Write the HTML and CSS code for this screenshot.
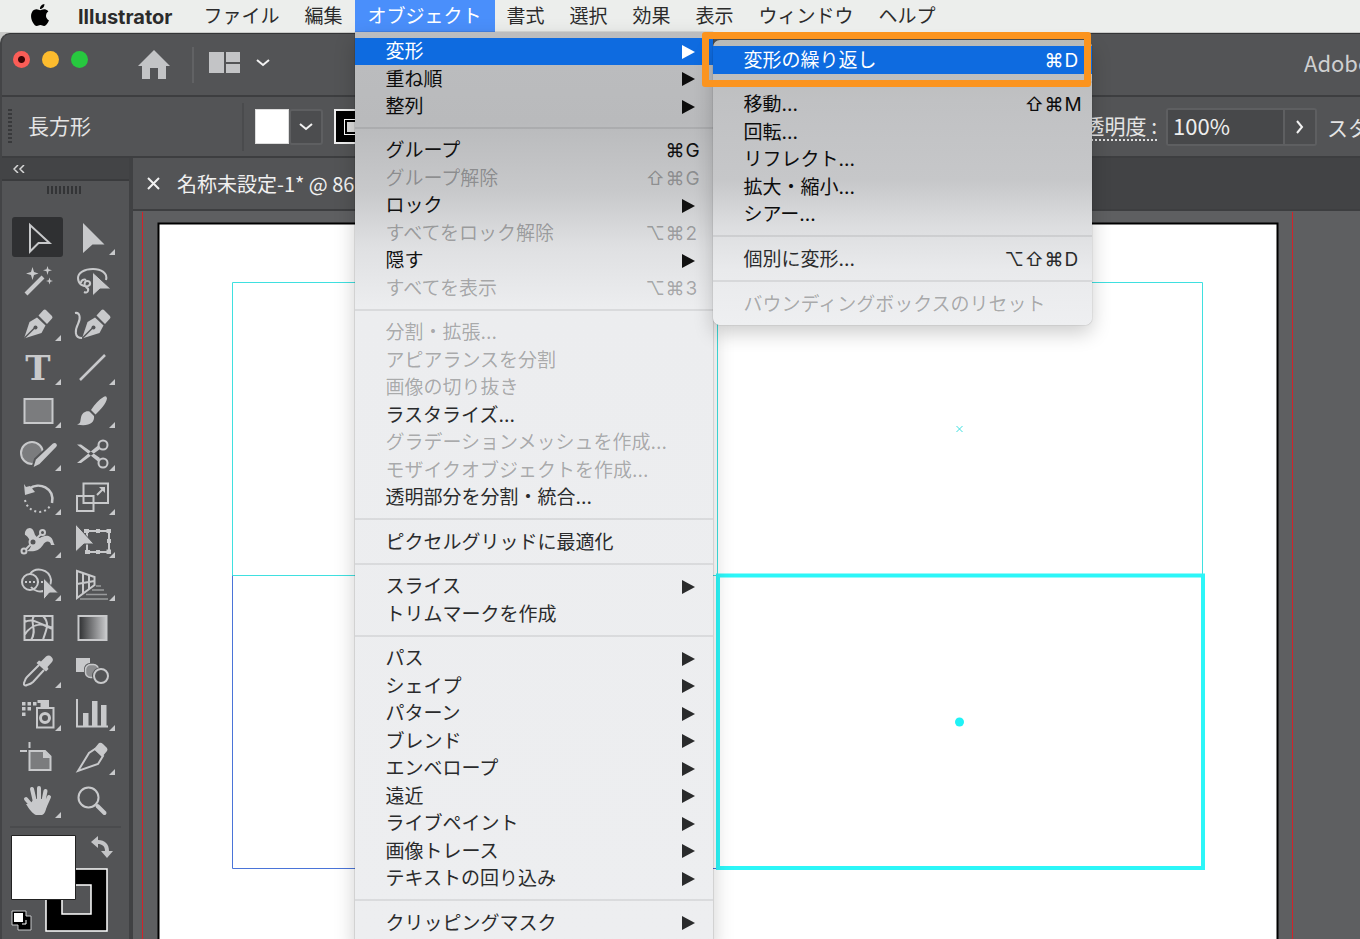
FILE: index.html
```html
<!DOCTYPE html>
<html lang="ja">
<head>
<meta charset="utf-8">
<title>Illustrator</title>
<link rel="stylesheet" href="styles.css">
</head>
<body>
<nav class="menubar">
  <button class="apple" aria-label="Apple"><svg viewBox="0 0 24 24" width="22" height="22"><path d="M12.152 6.896c-.948 0-2.415-1.078-3.96-1.04-2.04.027-3.91 1.183-4.961 3.014-2.117 3.675-.546 9.103 1.519 12.09 1.013 1.454 2.208 3.09 3.792 3.039 1.52-.065 2.09-.987 3.935-.987 1.831 0 2.35.987 3.96.948 1.637-.026 2.676-1.48 3.676-2.948 1.156-1.688 1.636-3.325 1.662-3.415-.039-.013-3.182-1.221-3.22-4.857-.026-3.04 2.48-4.494 2.597-4.559-1.429-2.09-3.623-2.324-4.39-2.376-2-.156-3.675 1.09-4.61 1.09zM15.53 3.83c.843-1.012 1.4-2.427 1.245-3.83-1.207.052-2.662.805-3.532 1.818-.78.896-1.454 2.338-1.273 3.714 1.338.104 2.715-.688 3.559-1.701"/></svg></button>
  <button class="bar-item app-name">Illustrator</button>
  <button class="bar-item">ファイル</button>
  <button class="bar-item">編集</button>
  <div class="bar-slot">
    <button class="bar-item open">オブジェクト</button>
    <div class="menu main-menu">
      <div class="group">
        <div class="item-slot">
          <button class="item active">変形<i class="arrow"></i></button>
          <div class="menu sub-menu">
            <div class="group"><button class="item active">変形の繰り返し<kbd><span>⌘</span><b>D</b></kbd></button></div>
            <div class="group">
              <button class="item">移動...<kbd><span>⇧</span><span>⌘</span><b>M</b></kbd></button>
              <button class="item">回転...</button>
              <button class="item">リフレクト...</button>
              <button class="item">拡大・縮小...</button>
              <button class="item">シアー...</button>
            </div>
            <div class="group"><button class="item">個別に変形...<kbd><span>⌥</span><span>⇧</span><span>⌘</span><b>D</b></kbd></button></div>
            <div class="group"><button class="item" disabled>バウンディングボックスのリセット</button></div>
            <div class="highlight"></div>
          </div>
        </div>
        <button class="item">重ね順<i class="arrow"></i></button>
        <button class="item">整列<i class="arrow"></i></button>
      </div>
      <div class="group">
        <button class="item">グループ<kbd><span>⌘</span><b>G</b></kbd></button>
        <button class="item" disabled>グループ解除<kbd><span>⇧</span><span>⌘</span><b>G</b></kbd></button>
        <button class="item">ロック<i class="arrow"></i></button>
        <button class="item" disabled>すべてをロック解除<kbd><span>⌥</span><span>⌘</span><b>2</b></kbd></button>
        <button class="item">隠す<i class="arrow"></i></button>
        <button class="item" disabled>すべてを表示<kbd><span>⌥</span><span>⌘</span><b>3</b></kbd></button>
      </div>
      <div class="group">
        <button class="item" disabled>分割・拡張...</button>
        <button class="item" disabled>アピアランスを分割</button>
        <button class="item" disabled>画像の切り抜き</button>
        <button class="item">ラスタライズ...</button>
        <button class="item" disabled>グラデーションメッシュを作成...</button>
        <button class="item" disabled>モザイクオブジェクトを作成...</button>
        <button class="item">透明部分を分割・統合...</button>
      </div>
      <div class="group"><button class="item">ピクセルグリッドに最適化</button></div>
      <div class="group">
        <button class="item">スライス<i class="arrow"></i></button>
        <button class="item">トリムマークを作成</button>
      </div>
      <div class="group">
        <button class="item">パス<i class="arrow"></i></button>
        <button class="item">シェイプ<i class="arrow"></i></button>
        <button class="item">パターン<i class="arrow"></i></button>
        <button class="item">ブレンド<i class="arrow"></i></button>
        <button class="item">エンベロープ<i class="arrow"></i></button>
        <button class="item">遠近<i class="arrow"></i></button>
        <button class="item">ライブペイント<i class="arrow"></i></button>
        <button class="item">画像トレース<i class="arrow"></i></button>
        <button class="item">テキストの回り込み<i class="arrow"></i></button>
      </div>
      <div class="group"><button class="item">クリッピングマスク<i class="arrow"></i></button></div>
    </div>
  </div>
  <button class="bar-item">書式</button>
  <button class="bar-item">選択</button>
  <button class="bar-item">効果</button>
  <button class="bar-item">表示</button>
  <button class="bar-item">ウィンドウ</button>
  <button class="bar-item">ヘルプ</button>
</nav>

<main class="app">
  <header class="titlebar">
    <div class="lights"><i class="light red"></i><i class="light yellow"></i><i class="light green"></i></div>
    <button class="home" aria-label="ホーム"><svg width="32" height="30" viewBox="0 0 32 30"><path fill="#c3c4c6" d="M16 0 32 16h-4v13h-8V18h-8v11H4V16H0z"/></svg></button>
    <div class="divider"></div>
    <button class="arrange" aria-label="ワークスペース"><svg width="62" height="22" viewBox="0 0 62 22"><path fill="#c3c4c6" d="M0 0h15v21H0zM17 0h14v10H17zM17 12h14v9H17z"/><path d="m48 8 6 5 6-5" fill="none" stroke="#f2f2f2" stroke-width="2"/></svg></button>
    <span class="search">Adobe Stock</span>
  </header>

  <section class="control">
    <div class="grip-v"></div>
    <span class="kind">長方形</span>
    <div class="swatch fill"></div>
    <button class="drop" aria-label="塗り"><svg width="14" height="8" viewBox="0 0 14 8"><path d="m1 1 6 5 6-5" fill="none" stroke="#f2f2f2" stroke-width="2"/></svg></button>
    <div class="swatch stroke"><i></i></div>
    <div class="opacity">
      <label for="opacity">不透明度 :</label>
      <div class="field"><input id="opacity" type="text" value="100%"><button aria-label="不透明度を選択"><svg width="8" height="14" viewBox="0 0 8 14"><path d="m1 1 5 6-5 6" fill="none" stroke="#f2f2f2" stroke-width="2"/></svg></button></div>
      <span class="style">スタイル</span>
    </div>
  </section>

  <section class="workspace">
    <aside class="tools">
      <div class="collapse"><button aria-label="折りたたむ"><svg width="12" height="8" viewBox="0 0 12 8"><path d="M5 0 1 4l4 4M11 0 7 4l4 4" fill="none" stroke="#d8d8d8" stroke-width="1.5"/></svg></button></div>
      <div class="grip-h"></div>
      <div class="tool-grid">
        <button class="tool selected" aria-label="選択"><svg viewBox="0 0 51 40"><path class="ln" d="M18 8v26.500l8.500-8.500h11z"/></svg></button>
        <button class="tool more" aria-label="ダイレクト選択"><svg viewBox="0 0 51 40"><path d="M17 6v30l9.500-8.500h12z"/></svg></button>

        <button class="tool" aria-label="自動選択"><svg viewBox="0 0 51 40"><path class="ln" stroke-width="4" d="m14 34 17-17"/><path d="m20.500 7 1.500 5 4.500 1.500-4.500 1.500-1.500 5-1.500-5-5-1.500 5-1.500zM35.500 6l1 3.200 3.500 1-3.500 1-1 3.800-1-3.800-3.500-1 3.500-1zM37.500 17.500l.9 2.700 2.600.8-2.600.8-.9 2.700-.9-2.700-2.600-.8 2.600-.8z"/></svg></button>
        <button class="tool" aria-label="なげなわ"><svg viewBox="0 0 51 40"><path class="ln" d="M40 20c2-7-5-11-13-11-9 0-15 4-15 9 0 6 5 9 10 8 3-1 3-5-1-5-3 0-3 5-1 6 4 2 2 7-2 5M15 23c0-3 3-4 5-3"/><path d="M26.500 12v24l7.500-7h11z" stroke="#535456"/></svg></button>

        <button class="tool more" aria-label="ペン"><svg viewBox="0 0 51 40"><g id="nib"><path d="M12 35.500 17.500 19l7.500-4.500 8.500 8-4 7.500z"/><path d="m26.500 12.500 5-5.500q1.500-1 3 .5l5.500 5.500q1 1.500 0 2.500l-5 5.500z"/><path d="m12 35.500 10.500-10.500" stroke="#535456" stroke-width="1.500"/><circle cx="23.500" cy="24.500" r="2" fill="#535456"/></g></svg></button>
        <button class="tool" aria-label="曲線"><svg viewBox="0 0 51 40"><use href="#nib" x="4"/><path class="ln" d="M9 10c5-1 6 5 3 11s-4 14 4 14"/></svg></button>

        <button class="tool more" aria-label="文字"><svg viewBox="0 0 51 40"><text x="26" y="33" text-anchor="middle" class="type">T</text></svg></button>
        <button class="tool more" aria-label="直線"><svg viewBox="0 0 51 40"><path class="ln" stroke-width="2.500" d="m14 33 25-25"/></svg></button>

        <button class="tool more" aria-label="長方形"><svg viewBox="0 0 51 40"><path class="ln tint" d="M12.500 9h28v24h-28z"/></svg></button>
        <button class="tool more" aria-label="ブラシ"><svg viewBox="0 0 51 40"><path d="M37.500 7q3-2 3.500 1.500c-1 5-6 11-11.500 16l-4.500-4.500c4-6 8-10.500 12.500-13zM23.500 21.500l4.500 4.500c1 7-6 11-17 8.500 4-1 3-3 4-7 1-5 5-7 8.500-6z"/></svg></button>

        <button class="tool more" aria-label="Shaper"><svg viewBox="0 0 51 40"><circle cx="20" cy="20" r="11" class="ln tint"/><path stroke="#535456" stroke-width="2" d="m20 36 3-10 17-16q3-2 5 0t0 4.500L28 32z"/></svg></button>
        <button class="tool more" aria-label="はさみ"><svg viewBox="0 0 51 40"><circle class="ln" cx="37" cy="12" r="4.500"/><circle class="ln" cx="37" cy="30" r="4.500"/><path d="M11 11.500h4l19 13.500-2 3.500zM11 30h4l19-14-2-3.500z"/></svg></button>

        <button class="tool more" aria-label="回転"><svg viewBox="0 0 51 40"><path class="ln" stroke-width="2.500" d="M17 12c10-8 26-1 23 14"/><path d="m12 7 2 3 4-1 5 6-10 3z"/><path class="ln" stroke-dasharray="2 3" d="M13 23c3 14 21 16 26 4"/></svg></button>
        <button class="tool more" aria-label="拡大・縮小"><svg viewBox="0 0 51 40"><path class="ln" d="M17.500 6.500h24.500v19.500h-24.500zM11 19h16.500v15H11zM31 18l6-6"/><path d="M33 10h6v6z"/></svg></button>

        <button class="tool more" aria-label="ワープ"><svg viewBox="0 0 51 40"><path d="M13 15c-1-7 7-10 9-3 1 4 3 6 6 6 4-3 11-4 13 3 1 4 2 4 2 4h-4c-1-5-6-4-8 0-4 6-9 7-16 6 5-3 5-8 2-12-2-3-3-4-4-4z"/><path class="ln" d="m14 29 15-15"/><g class="ln hole"><circle cx="12" cy="31" r="2.500"/><circle cx="30.500" cy="12.500" r="2.500"/><circle cx="21" cy="22" r="3.500"/></g></svg></button>
        <button class="tool more" aria-label="自由変形"><svg viewBox="0 0 51 40"><path class="ln" d="M21 11h22v21H21z"/><path d="M18 9h5v4h-5zM30 9h4v4h-4zM40.500 9h4.500v4h-4.500zM41 19h4v4h-4zM40.500 29.500h4.500v4.500h-4.500zM30 30h4v4h-4zM19 30h5v4h-5z"/><path stroke="#535456" d="M9.500 4v28l8.500-8h10z"/></svg></button>

        <button class="tool more" aria-label="シェイプ形成"><svg viewBox="0 0 51 40"><circle class="ln" cx="18" cy="19" r="8"/><path class="ln" d="M18 11c5-7 19-6 21 6 0 5-2 8-5 10-6 3-12 1-15-3"/><path class="ln" stroke-dasharray="2 2" d="M13 19h18"/><path d="M31.500 15v22l6-7h9z" stroke="#535456"/></svg></button>
        <button class="tool more" aria-label="遠近グリッド"><svg viewBox="0 0 51 40"><path class="ln" d="M11 8v27l17.500-13v-8zM11 21l17.500-3M17 10v20.500M23 12v14"/><path class="ln" stroke-width="1.500" opacity=".6" d="M30 23h5M26 27h12M20 31.500h21M14 36h28"/></svg></button>

        <button class="tool" aria-label="メッシュ"><svg viewBox="0 0 51 40"><path class="ln" d="M12.500 9h28v24h-28zM22 9c-5 6 4 14-3 24M31 9c8 8 2 16 0 24M12.500 15c8-4 12 0 28 7M12.500 28c8-13 18-12 28-7"/></svg></button>
        <button class="tool" aria-label="グラデーション"><svg viewBox="0 0 51 40"><defs><linearGradient id="g"><stop stop-color="#2e2f31"/><stop offset="1" stop-color="#c8c9cb"/></linearGradient></defs><path fill="url(#g)" stroke="#c8c9cb" stroke-width="2" d="M12.500 9h28v24h-28z"/></svg></button>

        <button class="tool more" aria-label="スポイト"><svg viewBox="0 0 51 40"><path class="ln" d="m27 15-12 12c-2 2-2 4-3 6-.5 2 1 3 3 2 2-.5 4-1 6-3l11-12"/><path d="m24.500 13 2.500-2.500 2 1 5-5q3-2 5.500.5t.5 5l-4.500 5 1 2-2.500 2.500z"/></svg></button>
        <button class="tool" aria-label="ブレンド"><svg viewBox="0 0 51 40"><path d="M10 8h14v14H10z"/><rect x="18" y="13" width="16" height="16" rx="6" fill="#535456"/><rect x="19.500" y="14.500" width="13" height="13" rx="5" fill="#8b8c8e" stroke="#c8c9cb" stroke-width="1.500"/><circle cx="35" cy="26" r="9" fill="#535456"/><circle class="ln" cx="35" cy="26" r="7"/></svg></button>

        <button class="tool more" aria-label="シンボルスプレー"><svg viewBox="0 0 51 40"><path class="ln" d="M25 15h16.500v19.500H25z"/><path d="M28.500 15v-5h-3V7h11.500v8zM10 9h3.500v3.500H10zM15.500 9H19v3.500h-3.500zM21 9h3.500v3.500H21zM10 14h3.500v3.500H10zM15.500 14H19v3.500h-3.500zM10 19.500h3.500V23H10z"/><circle class="ln" stroke-width="3" cx="33" cy="25" r="4.500"/></svg></button>
        <button class="tool more" aria-label="グラフ"><svg viewBox="0 0 51 40"><path class="ln" d="M11 6v27.500h31"/><path d="M17 20h5.500v13H17zM26 8h5.500v25H26zM35 12h5.500v21H35z"/></svg></button>

        <button class="tool" aria-label="アートボード"><svg viewBox="0 0 51 40"><path class="ln tint" d="M17.500 14H33l5.500 5.500V33h-21z"/><path d="M31 13v8h8z"/><path class="ln" d="M8 14h7M17.500 5v6"/></svg></button>
        <button class="tool more" aria-label="スライス"><svg viewBox="0 0 51 40"><path class="ln" d="m12 34 11-18 6-4 8 7-5 8z"/><path d="m28 12 5-6q2-1 4 1l4 4q1 2 0 3l-5 6z"/></svg></button>

        <button class="tool more" aria-label="手のひら"><svg viewBox="0 0 51 40"><path class="ln" stroke-width="4" stroke-linecap="round" d="m14 19 6 7M20 9l3 13M27 8v14M33.500 11 31 23M37 17l-4 9"/><path d="M18 24l4-5h12l1 6c-1 5-2 9-5 10h-6c-3-1-7-6-10-11z"/></svg></button>
        <button class="tool" aria-label="ズーム"><svg viewBox="0 0 51 40"><circle class="ln" cx="22.500" cy="17.500" r="10"/><path class="ln" stroke-width="4" stroke-linecap="round" d="m31.500 26 7 7"/></svg></button>
      </div>
      <div class="colors">
        <svg width="106" height="100" viewBox="0 0 106 100">
          <path d="M35 34h61v62H35z" fill="#000" stroke="#fff" stroke-width="1.500"/>
          <path d="M51 50h29v29H51z" fill="#535456" stroke="#fff" stroke-width="1.500"/>
          <path d="M.5.500h64v64H.5z" fill="#fff" stroke="#222"/>
          <path fill="#c3c4c6" d="M80 7l7-6v4c7 0 11 4 11 11h4l-6 7-6-7h4c0-5-3-7-7-7v4z"/>
          <path d="M1 76h14v5h5v14H7v-5H1z" fill="#000" stroke="#c8c9cb"/>
          <path d="M3 78h9v9H3z" fill="#fff"/><path d="M11 89h4v-4" fill="none" stroke="#fff"/>
        </svg>
      </div>
    </aside>
    <div class="document">
      <div class="tabs"><div class="tab"><button aria-label="閉じる"><svg width="14" height="14" viewBox="0 0 14 14"><path d="m1 1 11 11M12 1 1 12" stroke="#f2f2f2" stroke-width="2"/></svg></button><span>名称未設定-1* @ 86%</span></div></div>
      <svg class="canvas" width="1227" height="728" viewBox="133 211 1227 728">
        <path d="M142.500 212v727M1292.500 212v727" stroke="#d2232a"/>
        <path d="M158.500 940V223.500h1119V940" fill="#fff" stroke="#000" stroke-width="2"/>
        <g fill="none" stroke-width="1">
          <path d="M232.500 575v293.500H718" stroke="#4a74d8"/>
          <path d="M232.500 575.500v-293h970v293zM717.500 282.500v293" stroke="#3fe0e0"/>
          <path d="M718 575.500h485v292.500H718z" stroke="#2cf6f8" stroke-width="4"/>
          <path d="m956.500 426 6 6m0-6-6 6" stroke="#3fe0e0"/>
        </g>
        <circle cx="959.500" cy="722" r="4.500" fill="#1ff2f6"/>
      </svg>
    </div>
  </section>
</main>
</body>
</html>
```
FILE: styles.css
```css
* { box-sizing: border-box; }
html, body { height: 100%; }
body {
  margin: 0;
  display: flex;
  flex-direction: column;
  overflow: hidden;
  background: #c9cac8;
  font-family: Inter, "Noto Sans CJK JP", sans-serif;
  color: #e4e4e4;
}
button {
  margin: 0;
  padding: 0;
  border: 0;
  background: none;
  color: inherit;
  font: inherit;
  text-align: left;
}
svg { display: block; }

/* menu bar */
.menubar {
  position: relative;
  z-index: 2;
  display: flex;
  flex: none;
  height: 32px;
  padding-left: 29px;
  background: #eceeec;
  color: #2b2b2b;
  font-size: 19px;
  line-height: 30px;
  white-space: nowrap;
}
.apple { display: flex; align-items: flex-start; padding: 4px 0 0; width: 37px; }
.bar-item { padding: 2px 13px 0 12px; height: 32px; }
.app-name { padding-right: 19px; font-weight: 700; font-size: 20px; }
.bar-item.open { background: #4a8ffb; color: #fff; }
.bar-slot { position: relative; }

/* drop-down menus */
.menu {
  position: absolute;
  color: #0c0c0c;
  box-shadow: 0 0 1px #0008, 0 8px 20px #0003;
}
.main-menu {
  left: 0;
  top: 32px;
  width: 358px;
  padding: 6px 0 10px;
  background: linear-gradient(#bcbdbf 0, #b9babc 90px, #c8c9cb 160px, #dfe0e2 215px, #ecedef 275px, #edeef0 100%);
}
.sub-menu {
  left: 358px;
  top: 2px;
  width: 379px;
  padding: 6px 0 7px;
  border-radius: 7px;
  background: linear-gradient(#b9bab8 0, #c0c1c3 60px, #c6c7c9 140px, #dcdddf 185px, #e9eaec 230px, #eeeff1 284px);
}
.group + .group::before {
  content: "";
  display: block;
  height: 2px;
  margin: 7px 0 8px;
  background: #00000014;
}
.item-slot { position: relative; }
.item {
  display: flex;
  align-items: center;
  justify-content: space-between;
  width: 100%;
  height: 27px;
  padding: 0 10px 0 30px;
  font-size: 19px;
  line-height: 27px;
}
.item:nth-child(even), .item:only-child { height: 28px; }
.item.active { background: #0e6be0; color: #fff; }
.item:disabled { color: #0000004d; }
.arrow {
  margin-right: 8px;
  border-left: 13px solid;
  border-top: 7px solid transparent;
  border-bottom: 7px solid transparent;
}
.main-menu > .group:nth-child(n+2) .item:enabled,
.sub-menu > .group:nth-child(n+3) .item:enabled { color: #2a2b2c; }
.main-menu > .group:nth-child(2) .item:enabled { color: #111; }
kbd { display: flex; font: inherit; }
kbd span { width: 20px; }
kbd b { width: 18px; font-weight: 400; }
.highlight {
  position: absolute;
  inset: -8px 1px auto -11px;
  height: 55px;
  border: 7px solid #fb941f;
  border-radius: 3px;
}

/* application window */
.app {
  flex: 1;
  display: flex;
  flex-direction: column;
  min-height: 0;
  margin-top: 1px;
  border-top: 1px solid #343537;
  border-left: 2px solid #434446;
  border-radius: 10px 0 0 0;
  background: #535456;
}
.titlebar {
  display: flex;
  align-items: center;
  flex: none;
  height: 63px;
  padding-left: 11px;
  border-bottom: 2px solid #3d3e40;
}
.lights { display: flex; gap: 12px; padding-bottom: 10px; }
.light { width: 17px; height: 17px; border-radius: 50%; }
.red { background: radial-gradient(circle, #3c0505 3px, #fb5d57 4px); }
.yellow { background: #fdbc2e; }
.green { background: #27c83f; }
.home { margin-left: 50px; }
.divider { width: 2px; height: 36px; margin: 0 15px 0 22px; background: #616264; }
.arrange { padding-bottom: 4px; }
.search {
  width: 56px;
  margin-left: auto;
  padding-bottom: 6px;
  overflow: hidden;
  white-space: nowrap;
  font: 22px/30px "Noto Sans CJK JP", sans-serif;
  color: #cfd0d1;
}

.control {
  display: flex;
  align-items: center;
  flex: none;
  height: 61px;
  padding-left: 6px;
  border-bottom: 2px solid #3d3e40;
  font: 21px/30px "Noto Sans CJK JP", sans-serif;
}
.grip-v { width: 4px; height: 36px; background: repeating-linear-gradient(#38393b 0 2px, #535456 2px 4px); }
.kind { width: 232px; padding-left: 16px; border-right: 2px solid #4a4b4d; height: 48px; line-height: 44px; }
.swatch { width: 34px; height: 35px; border: 1px solid #ddd; flex: none; }
.fill { margin-left: 11px; background: #fff; }
.drop {
  display: grid;
  place-items: center;
  width: 34px;
  height: 36px;
  border: 2px solid #5e5f61;
  border-radius: 3px;
  background: #4c4d4f;
}
.stroke { margin-left: 11px; padding: 9px; border: 2px solid #eee; background: #000; }
.stroke i { display: block; width: 14px; height: 14px; background: #ddd; border: 2px solid #000; outline: 1px solid #fff; }
.opacity { display: flex; align-items: center; margin-left: auto; }
.opacity label { border-bottom: 2px dotted #ddd; line-height: 27px; margin-right: 9px; }
.field { display: flex; height: 38px; border: 2px solid #5e5f61; border-radius: 3px; }
.field input {
  width: 115px;
  padding: 0 5px 4px;
  border: 0;
  background: #47484a;
  color: #eee;
  font: 22px/30px "Noto Sans CJK JP", sans-serif;
}
.field button { display: grid; place-items: center; width: 32px; border-left: 2px solid #5e5f61; background: #4c4d4f; }
.style { width: 33px; margin-left: 10px; overflow: hidden; white-space: nowrap; }

.workspace { flex: 1; display: flex; min-height: 0; }
.tools { flex: none; width: 131px; border-right: 4px solid #404143; }
.collapse { display: flex; align-items: center; height: 23px; padding: 0 11px; border-bottom: 2px solid #3a3b3d; background: #434446; }
.grip-h { width: 35px; height: 8px; margin: 5px 0 23px 45px; background: repeating-linear-gradient(90deg, #333436 0 2px, #535456 2px 4px); }
.tool-grid {
  display: grid;
  grid-template-columns: 51px 51px;
  grid-template-rows: 43px 43px 44px 43px 43px 44px 43px 43px 44px 43px 43px 44px 43px 43px;
  column-gap: 3px;
  padding-left: 10px;
}
.tool { position: relative; height: 40px; border-radius: 3px; }
.tool.selected { background: #2f3032; }
.tool svg { width: 51px; height: 40px; fill: #c8c9cb; }
.ln { fill: none; stroke: #c8c9cb; }
.ln:not([stroke-width]) { stroke-width: 2px; }
.tint { fill: #7b7c7e; }
.hole { fill: #535456; }
.type { font: bold 34px "DejaVu Serif", serif; }
.more::after {
  content: "";
  position: absolute;
  right: 2px;
  bottom: 2px;
  border-left: 6px solid transparent;
  border-bottom: 6px solid #c8c9cb;
}
.colors { margin: 3px 8px 0; padding: 7px 1px 0; border-top: 2px solid #4a4b4d; }

.document { flex: 1; min-width: 0; display: flex; flex-direction: column; overflow: hidden; background: #5e5f61; }
.tabs { flex: none; display: flex; height: 53px; border-bottom: 2px solid #3d3e40; background: #424345; }
.tab {
  display: flex;
  align-items: center;
  gap: 16px;
  width: 440px;
  padding-left: 14px;
  background: #535456;
  font: 20px/30px "Noto Sans CJK JP", sans-serif;
  color: #f0f0f0;
  white-space: nowrap;
}
.canvas { flex: none; }
```
